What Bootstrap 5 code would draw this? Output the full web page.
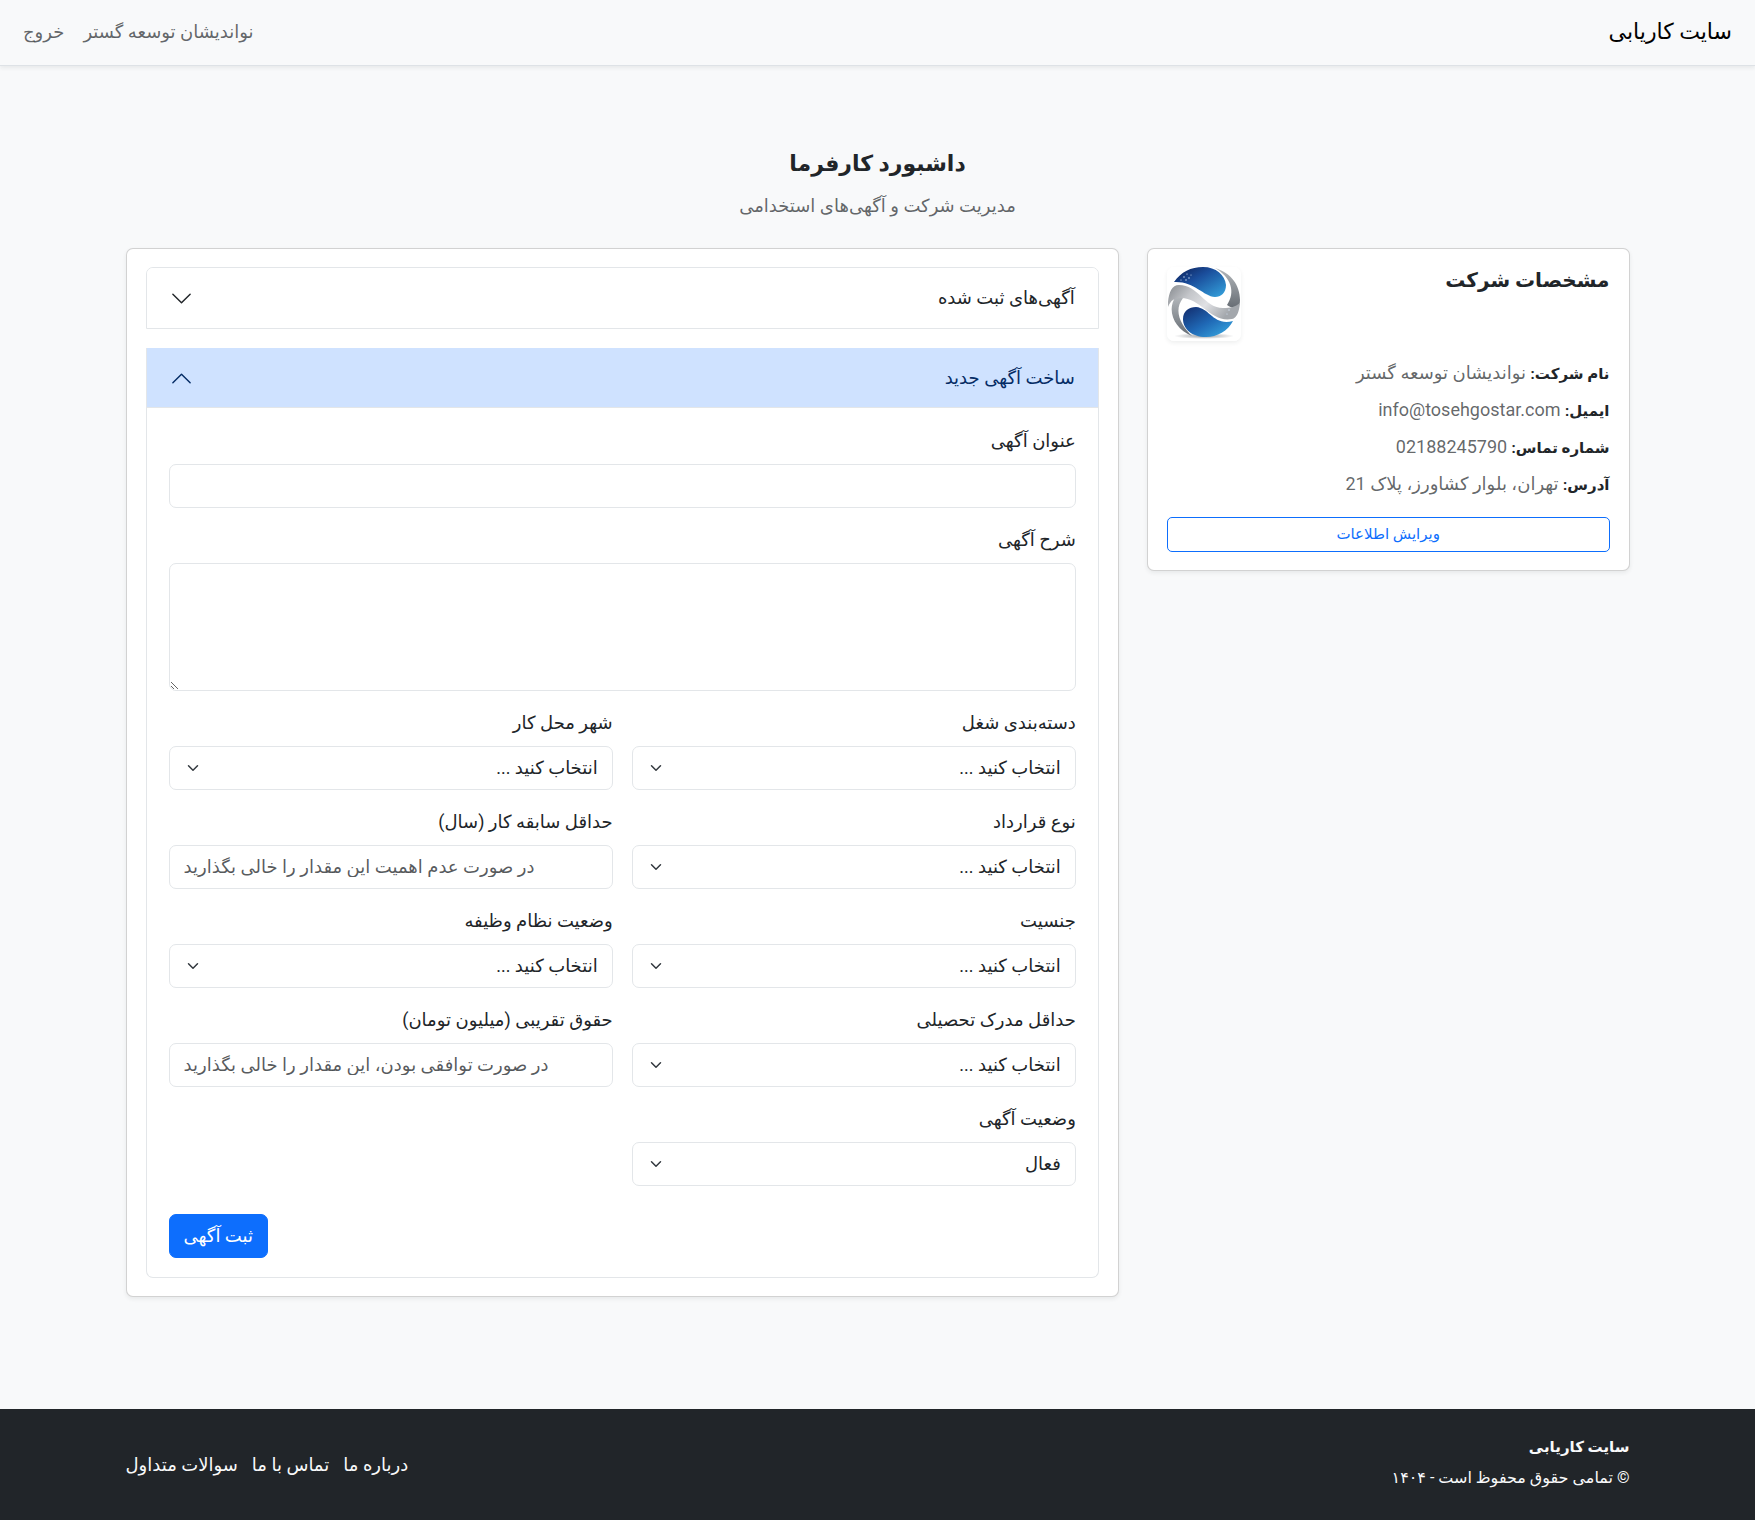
<!DOCTYPE html>
<html lang="fa" dir="rtl">
<head>
<meta charset="utf-8">
<meta name="viewport" content="width=device-width, initial-scale=1">
<title>سایت کاریابی</title>
<link href="https://cdn.jsdelivr.net/npm/bootstrap@5.3.0/dist/css/bootstrap.min.css" rel="stylesheet">
<style>
  body {
    --bs-body-font-family: Roboto, "DejaVu Sans", sans-serif;
    font-family: var(--bs-body-font-family);
    font-size: 18px;
    line-height: 28px;
    background: #f8f9fa;
  }
  .soft { color: rgba(33, 37, 41, .7); }
  .site-bar { min-height: 66px; padding: 0 23px 2px; border-bottom: 1px solid #dee2e6; }
  .site-bar .navbar-brand { font-size: 22px; margin: 0; padding: 0; }
  .site-bar .nav-link { padding: 0; }
  .nav-links { gap: 19px; }
  .page-wrap { max-width: 1532px; padding: 0 14px; }
  main { padding: 79px 0 108px; }
  .page-title { font-size: 22px; line-height: 38px; font-weight: 700; margin: 0 0 9px; }
  .page-head { margin-bottom: 28px; }
  .main-row { --bs-gutter-x: 28px; }
  .panel { border-radius: 7px; }
  .panel > .card-body { padding: 18px 19px; }
  .panel-title { font-size: 20px; line-height: 26px; font-weight: 700; }
  .logo-box { width: 74px; height: 74px; border-radius: 7px; }
  .facts { margin: 18px 0 19px; display: grid; gap: 9px; grid-auto-rows: 28px; }
  .facts strong, .foot-name { font-size: 15px; font-weight: 700; }
  .btn-edit { font-size: 15px; line-height: 25px; padding: 4px 9px; border-radius: 5px; }
  .accordion {
    --bs-accordion-border-color: #e3e6e9;
    --bs-accordion-border-radius: 7px;
    --bs-accordion-inner-border-radius: 6px;
    --bs-accordion-btn-active-icon: url("data:image/svg+xml,%3csvg xmlns='http://www.w3.org/2000/svg' viewBox='0 0 16 16' fill='%23052c65'%3e%3cpath fill-rule='evenodd' d='M1.646 4.646a.5.5 0 0 1 .708 0L8 10.293l5.646-5.647a.5.5 0 0 1 .708.708l-6 6a.5.5 0 0 1-.708 0l-6-6a.5.5 0 0 1 0-.708z'/%3e%3c/svg%3e");
  }
  .accordion-button { padding: 16px 23px; font-size: 18px; line-height: 28px; text-align: right; }
  .accordion-button::after { margin: 0 auto 0 0; width: 23px; height: 23px; background-size: 23px; }
  .accordion-button:not(.collapsed) { color: #052c65; background-color: #cfe2ff; }
  .accordion-item + .accordion-item { margin-top: 19px; }
  .accordion-body { padding: 19px 22px; }
  .fields { --bs-gutter-x: 19px; --bs-gutter-y: 18px; }
  .form-label { display: block; margin: 0 0 9px; }
  .form-control, .form-select {
    font-size: 18px; line-height: 28px; padding: 7px 14px;
    border-color: #e3e6e9; border-radius: 7px;
  }
  .form-select { padding-left: 42px; background-position: left 15px center; }
  .form-control::placeholder { color: rgba(33, 37, 41, .75); }
  textarea.form-control { height: 128px; }
  .note-left { text-align: left; }
  .btn-send { font-size: 18px; line-height: 28px; padding: 7px 14px; border-radius: 7px; margin-top: 28px; }
  .site-foot { padding: 24px 0; line-height: 28px; }
  .foot-copy { font-size: 16px; margin: 3px 0 4px; }
  .foot-links { gap: 14px; }
</style>
</head>
<body class="d-flex flex-column min-vh-100">
<nav class="navbar site-bar shadow-sm justify-content-between">
  <a class="navbar-brand" href="#">سایت کاریابی</a>
  <div class="d-flex nav-links">
    <a class="nav-link soft" href="#">نواندیشان توسعه گستر</a>
    <a class="nav-link soft" href="#">خروج</a>
  </div>
</nav>

<main class="flex-grow-1">
  <div class="container-fluid page-wrap">
    <header class="page-head text-center">
      <h1 class="page-title">داشبورد کارفرما</h1>
      <p class="soft m-0">مدیریت شرکت و آگهی‌های استخدامی</p>
    </header>

    <div class="row main-row align-items-start">
      <aside class="col-lg-4">
        <div class="card panel shadow-sm">
          <div class="card-body">
            <div class="d-flex justify-content-between align-items-start">
              <h2 class="panel-title m-0">مشخصات شرکت</h2>
              <svg class="logo-box shadow-sm" viewBox="0 0 74 74" role="img" aria-label="نشان شرکت">
                <defs>
                  <linearGradient id="top" x1="0" y1="0" x2="1" y2="1"><stop offset="0" stop-color="#0c1c50"/><stop offset=".4" stop-color="#1a4d9b"/><stop offset="1" stop-color="#35a5df"/></linearGradient>
                  <linearGradient id="low" x1="0" y1="0" x2="1" y2="1"><stop offset="0" stop-color="#122a6b"/><stop offset=".5" stop-color="#1f68b5"/><stop offset="1" stop-color="#3bb0e6"/></linearGradient>
                  <linearGradient id="band" x1="0" y1="0" x2="1" y2=".4"><stop offset="0" stop-color="#85898e"/><stop offset=".35" stop-color="#c4c6ca"/><stop offset=".65" stop-color="#e0e1e4"/><stop offset="1" stop-color="#a3a7ac"/></linearGradient>
                  <linearGradient id="edge" x1="0" y1="0" x2="0" y2="1"><stop offset="0" stop-color="#b4b8bc"/><stop offset="1" stop-color="#666c73"/></linearGradient>
                  <radialGradient id="shade"><stop offset="0" stop-color="#9a9da1"/><stop offset="1" stop-color="#fff"/></radialGradient>
                </defs>
                <rect width="74" height="74" fill="#fff"/>
                <ellipse cx="37" cy="69" rx="30" ry="3" fill="url(#shade)"/>
                <path d="M7 15C14 5 24 0 36 0c13 0 22 8 23 18 0 8-5 12-11 12C36 29 27 14 7 15Z" fill="url(#top)"/>
                <path d="M48 1c16 5 25 17 25 32 0 4-1 6-3 8-3 1-7-1-10-3 9-13 4-28-12-37Z" fill="url(#edge)"/>
                <path d="M9 29C-1 43 7 62 25 69 14 58 6 44 16 31Z" fill="url(#edge)"/>
                <path d="M1 35C2 25 5 18 12 18c19 0 26 23 44 23 8 0 12-1 17-5-1 9-3 15-8 16C44 56 34 31 14 31 7 31 4 33 1 40Z" fill="url(#band)"/>
                <path d="M29 40C43 41 46 59 66 54 61 64 50 70 39 70 25 70 16 62 16 52c0-8 6-12 13-12Z" fill="url(#low)"/>
                <g fill="#d7e6f7"><circle cx="17" cy="10" r=".7"/><circle cx="20" cy="7" r=".6"/><circle cx="22" cy="11" r=".7"/><circle cx="14" cy="13" r=".6"/><circle cx="19" cy="13" r=".7"/><circle cx="24" cy="8" r=".5"/><circle cx="62" cy="43" r=".7"/><circle cx="60" cy="47" r=".6"/></g>
              </svg>
            </div>
            <div class="facts">
              <div><strong>نام شرکت:</strong> <span class="soft">نواندیشان توسعه گستر</span></div>
              <div><strong>ایمیل:</strong> <span class="soft">info@tosehgostar.com</span></div>
              <div><strong>شماره تماس:</strong> <span class="soft">02188245790</span></div>
              <div><strong>آدرس:</strong> <span class="soft">تهران، بلوار کشاورز، پلاک 21</span></div>
            </div>
            <button type="button" class="btn btn-outline-primary btn-edit w-100">ویرایش اطلاعات</button>
          </div>
        </div>
      </aside>

      <section class="col-lg-8">
        <div class="card panel shadow-sm">
          <div class="card-body">
            <div class="accordion" id="ads">
              <div class="accordion-item">
                <h2 class="accordion-header"><button class="accordion-button collapsed" type="button" data-bs-toggle="collapse" data-bs-target="#adList" aria-expanded="false" aria-controls="adList">آگهی‌های ثبت شده</button></h2>
                <div id="adList" class="accordion-collapse collapse"><div class="accordion-body"></div></div>
              </div>
              <div class="accordion-item border-top-0">
                <h2 class="accordion-header"><button class="accordion-button" type="button" data-bs-toggle="collapse" data-bs-target="#adNew" aria-expanded="true" aria-controls="adNew">ساخت آگهی جدید</button></h2>
                <div id="adNew" class="accordion-collapse collapse show">
                  <form class="accordion-body">
                    <div class="row fields">
                      <div class="col-12"><label class="form-label" for="title">عنوان آگهی</label><input class="form-control" id="title" type="text"></div>
                      <div class="col-12"><label class="form-label" for="about">شرح آگهی</label><textarea class="form-control" id="about"></textarea></div>
                      <div class="col-md-6"><label class="form-label" for="cat">دسته‌بندی شغل</label><select class="form-select" id="cat"><option>انتخاب کنید ...</option></select></div>
                      <div class="col-md-6"><label class="form-label" for="city">شهر محل کار</label><select class="form-select" id="city"><option>انتخاب کنید ...</option></select></div>
                      <div class="col-md-6"><label class="form-label" for="deal">نوع قرارداد</label><select class="form-select" id="deal"><option>انتخاب کنید ...</option></select></div>
                      <div class="col-md-6"><label class="form-label" for="years">حداقل سابقه کار (سال)</label><input class="form-control note-left" id="years" type="text" inputmode="numeric" placeholder="در صورت عدم اهمیت این مقدار را خالی بگذارید"></div>
                      <div class="col-md-6"><label class="form-label" for="sex">جنسیت</label><select class="form-select" id="sex"><option>انتخاب کنید ...</option></select></div>
                      <div class="col-md-6"><label class="form-label" for="duty">وضعیت نظام وظیفه</label><select class="form-select" id="duty"><option>انتخاب کنید ...</option></select></div>
                      <div class="col-md-6"><label class="form-label" for="degree">حداقل مدرک تحصیلی</label><select class="form-select" id="degree"><option>انتخاب کنید ...</option></select></div>
                      <div class="col-md-6"><label class="form-label" for="pay">حقوق تقریبی (میلیون تومان)</label><input class="form-control note-left" id="pay" type="text" inputmode="numeric" placeholder="در صورت توافقی بودن، این مقدار را خالی بگذارید"></div>
                      <div class="col-md-6"><label class="form-label" for="state">وضعیت آگهی</label><select class="form-select" id="state"><option>فعال</option></select></div>
                    </div>
                    <div class="d-flex justify-content-end"><button type="submit" class="btn btn-primary btn-send">ثبت آگهی</button></div>
                  </form>
                </div>
              </div>
            </div>
          </div>
        </div>
      </section>
    </div>
  </div>
</main>

<footer class="site-foot bg-dark text-light">
  <div class="container-fluid page-wrap d-flex justify-content-between align-items-center">
    <div>
      <div class="foot-name">سایت کاریابی</div>
      <div class="foot-copy">© تمامی حقوق محفوظ است - ۱۴۰۴</div>
    </div>
    <div class="d-flex foot-links">
      <a class="text-light text-decoration-none" href="#">درباره ما</a>
      <a class="text-light text-decoration-none" href="#">تماس با ما</a>
      <a class="text-light text-decoration-none" href="#">سوالات متداول</a>
    </div>
  </div>
</footer>
<script src="https://cdn.jsdelivr.net/npm/bootstrap@5.3.0/dist/js/bootstrap.bundle.min.js"></script>
</body>
</html>
